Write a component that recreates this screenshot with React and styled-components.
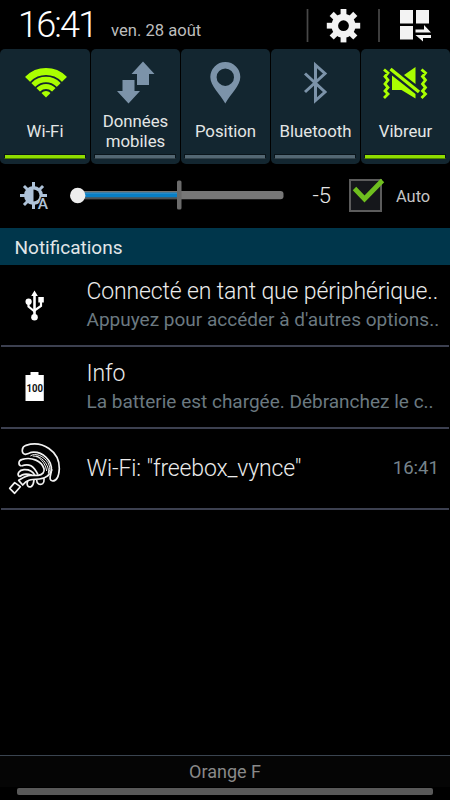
import React from "react";
import styled, { createGlobalStyle } from "styled-components";

const Color = {
  Tile: "#132630",
  Green: "#aaff00",
  Slate: "#7c93a9",
  Band: "#00364b",
  Divider: "#3c4050",
  Title: "#ebebeb",
  Sub: "#6b7980",
};

const GlobalStyle = createGlobalStyle`
  * {
    box-sizing: border-box;
  }
  body {
    margin: 0;
    background: #000;
    font-family: Roboto, "Liberation Sans", sans-serif;
  }
  svg {
    display: block;
    flex: none;
  }
`;

const Screen = styled.div`
  display: flex;
  flex-direction: column;
  width: 450px;
  height: 800px;
  overflow: hidden;
  background: #000;
`;

const Header = styled.header`
  display: flex;
  height: 49px;
  padding-left: 18px;
  white-space: nowrap;
`;

const Clock = styled.div`
  width: 93px;
  font-size: 36px;
  font-weight: 300;
  line-height: 50px;
  letter-spacing: -1.8px;
  color: #fff;
`;

const DateText = styled.div`
  width: 186px;
  font-size: 16.6px;
  line-height: 62px;
  color: #bdbdbd;
`;

const Tiles = styled.div`
  display: grid;
  grid-template-columns: 90px repeat(4, 89px);
  gap: 1px;
  height: 115px;
`;

const Tile = styled.div`
  display: flex;
  flex-direction: column;
  align-items: center;
  padding: 9px 4px 5px 3px;
  border-radius: 5px;
  background: ${Color.Tile};
`;

const TileLabel = styled.div`
  display: flex;
  align-items: center;
  justify-content: center;
  height: 46px;
  padding-left: 1px;
  font-size: 16.8px;
  line-height: 20px;
  text-align: center;
  white-space: pre;
  color: #e4e6e6;
`;

const TileBar = styled.div`
  width: 82px;
  height: 5px;
  margin-top: auto;
  border: 1px solid #0a151b;
  border-bottom-color: ${({ $on }) => ($on ? "#508500" : "#34444d")};
  background: ${({ $on }) => ($on ? "#8fdc00" : "#536773")};
`;

const BrightnessRow = styled.div`
  display: flex;
  align-items: center;
  height: 64px;
  padding-left: 18px;
`;

const Level = styled.div`
  width: 47px;
  margin-right: 16px;
  padding-right: 1px;
  text-align: right;
  font-size: 22px;
  line-height: 64px;
  font-weight: 300;
  color: #e6e6e6;
`;

const AutoLabel = styled.div`
  margin-left: 10px;
  font-size: 16.4px;
  line-height: 65px;
  color: #c4c4c4;
`;

const Band = styled.div`
  height: 37px;
  padding-left: 14.5px;
  background: ${Color.Band};
  color: #e2e6e8;
  font-size: 19px;
  line-height: 39px;
`;

const Row = styled.div`
  display: flex;
  height: ${({ $height }) => $height}px;
  margin: 0 1px;
  border-bottom: 2px solid ${Color.Divider};
  white-space: nowrap;
`;

const RowIcon = styled.div`
  width: 85.5px;
  flex: none;
`;

const RowText = styled.div`
  flex: 1;
  min-width: 0;
  display: flex;
  flex-direction: column;
  justify-content: center;
`;

const RowTitle = styled.div`
  font-size: 23px;
  font-weight: 300;
  line-height: 29px;
  letter-spacing: -0.14px;
  color: ${Color.Title};
`;

const RowSub = styled.div`
  font-size: 19px;
  line-height: 28px;
  color: ${Color.Sub};
`;

const RowTime = styled.div`
  padding-right: 10px;
  font-size: 18.6px;
  line-height: 79px;
  color: #76838b;
`;

const Footer = styled.footer`
  display: flex;
  flex-direction: column;
  align-items: center;
  height: 45px;
  margin-top: auto;
  border-top: 1px solid #3a4450;
  background: linear-gradient(#050505 31px, #000 31px);
`;

const Carrier = styled.div`
  height: 32px;
  font-size: 18px;
  line-height: 31px;
  color: #898989;
`;

const Handle = styled.div`
  width: 416px;
  height: 6.5px;
  border-radius: 2px;
  background: #595959;
`;

const BatteryText = styled.text`
  font: 700 11px Roboto, sans-serif;
`;

const AutoMark = styled.text`
  font: 500 15.5px Roboto, sans-serif;
`;

const HeaderIcons = () => (
  <svg width="153" height="49" viewBox="297 0 153 49">
    <path d="M307.500 9V42M379 9V42" stroke="#484848" strokeWidth="1.700" />
    <g fill="#f3f3f3">
      <circle cx="343.500" cy="25.700" r="12" />
      {[0, 45, 90, 135, 180, 225, 270, 315].map((a) => (
        <rect
          key={a}
          x="340.600"
          y="9"
          width="5.800"
          height="8"
          transform={`rotate(${a} 343.5 25.7)`}
        />
      ))}
      <path d="M400 10h13v13.500h-13zM416 10h13v13.500h-13zM400 26h13v13.500h-13z" />
      <path d="M415.500 29.500H424V25l7 7.500H415.500zM431 35H415.500l7.500 6.500V38h8z" />
    </g>
    <circle cx="343.500" cy="25.700" r="5.400" fill="#000" />
  </svg>
);

const TileIcon = ({ x, children }) => (
  <svg width="82" height="50" viewBox={`${x} 58 82 50`}>
    {children}
  </svg>
);

const WifiIcon = () => (
  <TileIcon x={3.5}>
    <clipPath id="fan">
      <path d="M45.500 97.500L17 69.500V60H74V69.500z" />
    </clipPath>
    <g clipPath="url(#fan)" fill="none" stroke={Color.Green} strokeWidth="6">
      <circle cx="45.500" cy="97" r="3" />
      <circle cx="45.500" cy="97" r="10.500" strokeWidth="5" />
      <circle cx="45.500" cy="97" r="17.500" strokeWidth="5.500" />
      <circle cx="45.500" cy="97" r="25.500" strokeWidth="7" />
    </g>
  </TileIcon>
);

const DataIcon = () => (
  <TileIcon x={94}>
    <path
      fill={Color.Slate}
      d="M143 61.500L154.500 74H149V85H137V74H131.500zM122.500 80H134.500V91H140L128.500 103.500L117 91H122.500z"
    />
  </TileIcon>
);

const PinIcon = () => (
  <TileIcon x={184}>
    <path
      fill={Color.Slate}
      fillRule="evenodd"
      d="M225.300 103.500C220 94 210.300 86 210.300 77A15 15 0 0 1 240.300 77C240.300 86 230.500 94 225.300 103.500zM225.300 68.500a8.700 8.700 0 1 0 0 17.400a8.700 8.700 0 0 0 0-17.400z"
    />
  </TileIcon>
);

const BluetoothIcon = () => (
  <TileIcon x={274}>
    <path
      d="M305 73.500L325 92L315.500 100.500V65L325 73.500L305 92"
      fill="none"
      stroke={Color.Slate}
      strokeWidth="3"
    />
  </TileIcon>
);

const VibrateIcon = () => (
  <TileIcon x={364}>
    <path
      d="M384 69.500l4 3.500l-3 3.500l3 3.500l-3 4l3 3.500l-3 3.500l3 3l-4 4M421.500 69.500l4 3.500l-3 3.500l3 3.500l-3 4l3 3.500l-3 3.500l3 3l-4 4"
      fill="none"
      stroke={Color.Green}
      strokeWidth="2.800"
    />
    <path d="M390.500 69L419 92" stroke={Color.Green} strokeWidth="3.400" />
    <path
      fill={Color.Green}
      d="M404 75L415.500 67V84zM392 75.500L415.500 94V98.500L401.500 90H392z"
    />
  </TileIcon>
);

const BrightnessIcon = () => (
  <svg width="50" height="40" viewBox="18 176 50 40">
    <g fill="#aec2d8">
      <circle cx="33.500" cy="195.500" r="9.500" />
      {[0, 45, 90, 135, 180, 225, 270, 315].map((a) => (
        <rect
          key={a}
          x="32"
          y="182"
          width="3"
          height="6"
          transform={`rotate(${a} 33.500 195.500)`}
        />
      ))}
    </g>
    <path d="M33.500 189.500A6 6 0 0 1 33.500 201.500z" fill="#000" />
    <AutoMark
      x="37.700"
      y="208.500"
      fill="#aec2d8"
      stroke="#000"
      strokeWidth="2"
      paintOrder="stroke"
    >
      A
    </AutoMark>
  </svg>
);

const Slider = () => (
  <svg width="217" height="40" viewBox="68 176 217 40">
    <rect x="74" y="191" width="209.500" height="8.300" rx="3" fill="#777" />
    <path d="M80 192H178V199H80z" fill="#4f5355" />
    <path d="M80 195H178" stroke="#087fc6" strokeWidth="4.500" />
    <path d="M80 193H178" stroke="#3f98cf" strokeWidth="1" />
    <rect x="177" y="180.500" width="4.500" height="29" rx="1.500" fill="#6b6b6b" />
    <circle cx="77.700" cy="195.500" r="7.700" fill="#ededed" />
  </svg>
);

const CheckBox = () => (
  <svg width="38" height="40" viewBox="348 176 38 40">
    <rect
      x="350"
      y="180"
      width="31"
      height="31"
      fill="#15171b"
      stroke="#5c5c5c"
      strokeWidth="2"
    />
    <path
      d="M354.500 188.500L364.500 199L382.500 180.500"
      fill="none"
      stroke="#6fbf1f"
      strokeWidth="4.800"
    />
  </svg>
);

const UsbIcon = () => (
  <svg width="84" height="80" viewBox="1 265 84 80">
    <g fill="none" stroke="#fff" strokeWidth="2.200">
      <path d="M34.500 294V316" strokeWidth="2.600" />
      <path d="M28.500 302V306.500L34.500 311.500M41 300V306L34.500 310.500" />
    </g>
    <g fill="#fff">
      <path d="M34.500 290.500L37.800 296H31.200z" />
      <circle cx="34.500" cy="317.300" r="3.300" />
      <circle cx="28.600" cy="301.700" r="3.100" />
      <rect x="38.300" y="297" width="5.500" height="5.500" />
    </g>
  </svg>
);

const BatteryIcon = () => (
  <svg width="84" height="80" viewBox="1 347 84 80">
    <path d="M30.500 372H38.500V375H43.800V401H25.500V375H30.500z" fill="#fff" />
    <BatteryText
      x="34.700"
      y="392"
      textAnchor="middle"
      textLength="16.5"
      lengthAdjust="spacingAndGlyphs"
      fill="#111"
    >
      100
    </BatteryText>
  </svg>
);

// Hand outline drawn on a grid three times its display size
const HandIcon = () => (
  <svg width="80" height="80" viewBox="3 -5 240 240">
    <g
      fill="none"
      stroke="#f2f2f2"
      strokeWidth="5"
      strokeLinejoin="round"
    >
      <path d="M76 71C63 68 64 49 78 44C127 28 179 62 178 114C177 132 171 151 158 151C145 149 152 134 154 121C158 91 128 61 94 65Q86 69 76 71z" />
      <path d="M91 76C105 65 132 76 144 96C154 115 149 132 135 141M98 76C118 75 136 96 140 121M108 76C131 81 149 108 145 128" strokeWidth="3" />
      <path d="M64 106C54 104 54 89 67 86C96 78 125 91 132 114C134 124 128 133 114 134H91C76 135 68 142 56 149L68 163C80 148 90 146 118 145C138 144 153 131 156 116" />
      <path d="M64 106C88 97 100 105 114 132M58 138C49 129 58 118 72 117C88 116 99 124 104 133M58 139C69 127 81 128 96 134" />
      <path d="M83 150C78 165 86 171 93 168C102 163 101 154 102 147M110 148C110 161 120 164 128 159C134 154 132 147 132 143" />
      <path d="M44 156L61 168L44 188L29 173z" />
    </g>
  </svg>
);

const toggles = [
  { label: "Wi-Fi", on: true, Icon: WifiIcon },
  { label: "Données\nmobiles", Icon: DataIcon },
  { label: "Position", Icon: PinIcon },
  { label: "Bluetooth", Icon: BluetoothIcon },
  { label: "Vibreur", on: true, Icon: VibrateIcon },
];

const notifications = [
  {
    title: "Connecté en tant que périphérique..",
    sub: "Appuyez pour accéder à d'autres options..",
    height: 82,
    Icon: UsbIcon,
  },
  {
    title: "Info",
    sub: "La batterie est chargée. Débranchez le c..",
    height: 82,
    Icon: BatteryIcon,
  },
  { title: 'Wi-Fi: "freebox_vynce"', time: "16:41", height: 81, Icon: HandIcon },
];

export default function App() {
  return (
    <Screen>
      <GlobalStyle />
      <Header>
        <Clock>16:41</Clock>
        <DateText>ven. 28 août</DateText>
        <HeaderIcons />
      </Header>
      <Tiles>
        {toggles.map(({ label, on, Icon }) => (
          <Tile key={label}>
            <Icon />
            <TileLabel>{label}</TileLabel>
            <TileBar $on={on} />
          </Tile>
        ))}
      </Tiles>
      <BrightnessRow>
        <BrightnessIcon />
        <Slider />
        <Level>-5</Level>
        <CheckBox />
        <AutoLabel>Auto</AutoLabel>
      </BrightnessRow>
      <Band>Notifications</Band>
      {notifications.map(({ title, sub, time, height, Icon }) => (
        <Row key={title} $height={height}>
          <RowIcon>
            <Icon />
          </RowIcon>
          <RowText>
            <RowTitle>{title}</RowTitle>
            {sub && <RowSub>{sub}</RowSub>}
          </RowText>
          {time && <RowTime>{time}</RowTime>}
        </Row>
      ))}
      <Footer>
        <Carrier>Orange F</Carrier>
        <Handle />
      </Footer>
    </Screen>
  );
}
